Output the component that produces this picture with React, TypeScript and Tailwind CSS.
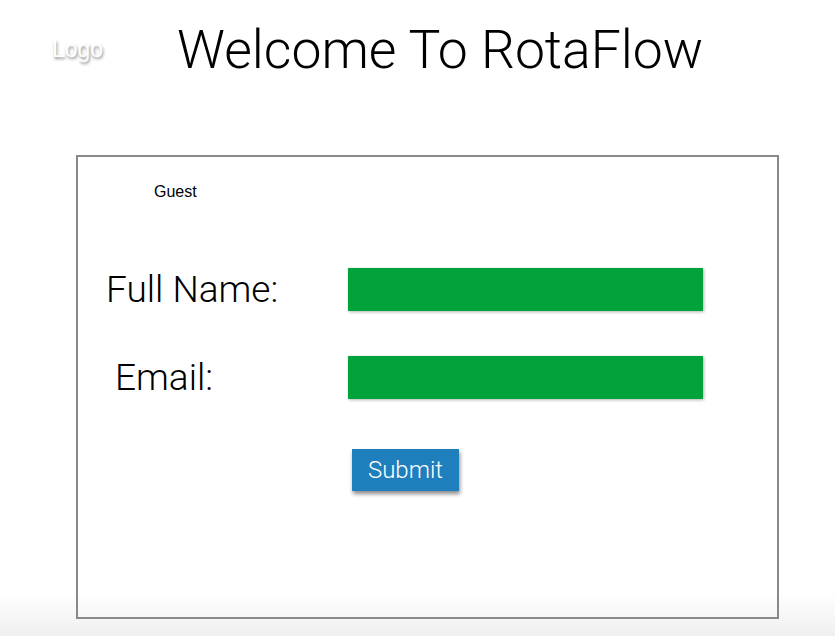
import React from "react";

const FieldRow = ({ label, indent }: { label: string; indent: string }) => {
  return (
    <div className="flex items-center h-[43px] pl-[28px]">
      <label className={`w-[242px] text-[37px] leading-none font-light font-['Roboto',sans-serif] text-black ${indent}`}>
        {label}
      </label>
      <div className="w-[355px] h-full bg-[#02a33b] shadow-[1px_1px_3px_rgba(0,0,0,0.3)]" />
    </div>
  );
};

const App = () => {
  return (
    <div className="min-h-[636px] w-full bg-[linear-gradient(to_bottom,#ffffff_0px,#ffffff_592px,#efefef_636px)] font-['Liberation_Sans','Helvetica_Neue',Arial,sans-serif] text-black">
      <header className="flex items-start h-[155px]">
        <div className="w-[177px] pl-[52px] pt-[38px]">
          <span className="text-[23px] leading-none text-white [text-shadow:1px_2px_3px_rgba(0,0,0,0.45)]">
            Logo
          </span>
        </div>
        <h1 className="pt-[23px] text-[53.5px] leading-none font-light font-['Roboto',sans-serif]">
          Welcome To RotaFlow
        </h1>
      </header>

      <main className="ml-[76px] w-[703px] h-[464px] border-2 border-[#87898b]">
        <p className="pl-[76px] pt-[25px] text-[16px] leading-[20px]">Guest</p>

        <div className="mt-[66px] flex flex-col gap-[45px]">
          <FieldRow label="Full Name:" indent="" />
          <FieldRow label="Email:" indent="pl-[9px]" />
        </div>

        <button className="ml-[274px] mt-[50px] w-[107px] h-[42px] bg-[#1f7fbd] text-white text-[24px] leading-none font-light font-['Roboto',sans-serif] shadow-[1px_3px_4px_rgba(0,0,0,0.45)]">
          Submit
        </button>
      </main>
    </div>
  );
};

export default App;
